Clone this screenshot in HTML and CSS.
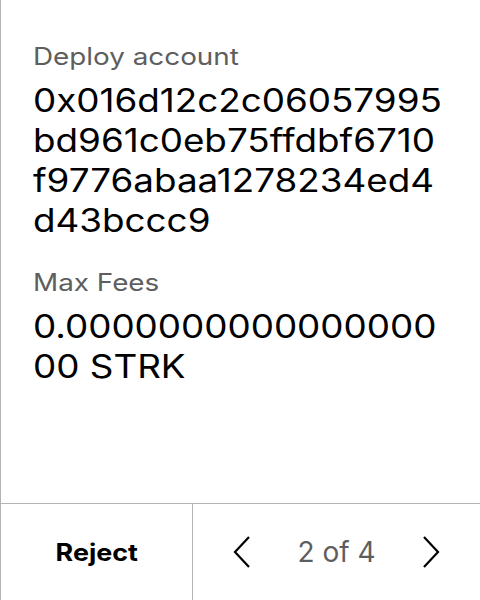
FILE: index.html
```html
<!DOCTYPE html>
<html>
<head>
<meta charset="utf-8">
<link rel="stylesheet" href="styles.css">
</head>
<body>
<div class="screen">
  <main class="content">
    <section class="field">
      <div class="label">Deploy account</div>
      <div class="value">0x016d12c2c06057995<br>bd961c0eb75ffdbf6710<br>f9776abaa1278234ed4<br>d43bccc9</div>
    </section>
    <section class="field">
      <div class="label">Max Fees</div>
      <div class="value">0.0000000000000000<br>00 STRK</div>
    </section>
  </main>
  <footer class="footer">
    <div class="reject"><span class="reject-text">Reject</span></div>
    <div class="pager">
      <svg class="chev" width="18" height="32" viewBox="0 0 18 32"><path d="M16 1 L2 16 L16 31" fill="none" stroke="#000" stroke-width="2.2"/></svg>
      <span class="count">2 of 4</span>
      <svg class="chev" width="18" height="32" viewBox="0 0 18 32"><path d="M2 1 L16 16 L2 31" fill="none" stroke="#000" stroke-width="2.2"/></svg>
    </div>
  </footer>
</div>
</body>
</html>
```

FILE: styles.css
```css
html, body {
  margin: 0;
  padding: 0;
  background: #fff;
}
body {
  font-family: Inter, "Noto Sans", sans-serif;
  color: #000;
}
.screen {
  width: 480px;
  height: 600px;
  box-sizing: border-box;
  border-left: 1px solid #b3b3b3;
  display: flex;
  flex-direction: column;
  overflow: hidden;
}
.content {
  flex: 1;
  padding: 41px 0 0 32px;
  display: flex;
  flex-direction: column;
  gap: 26px;
}
.field {
  display: flex;
  flex-direction: column;
  align-items: flex-start;
  gap: 8px;
}
.label {
  font-size: 24px;
  line-height: 32px;
  color: #5e5e5e;
  white-space: nowrap;
  transform: scaleX(1.16);
  transform-origin: left center;
}
.value {
  font-size: 32px;
  line-height: 40px;
  color: #000;
  white-space: nowrap;
  transform: scaleX(1.15);
  transform-origin: left center;
}
.footer {
  height: 96px;
  border-top: 1px solid #b3b3b3;
  display: flex;
}
.reject {
  width: 191px;
  border-right: 1px solid #b3b3b3;
  display: flex;
  align-items: center;
  justify-content: center;
}
.reject-text {
  display: inline-block;
  font-size: 24px;
  font-weight: 700;
  transform: scaleX(1.12);
}
.pager {
  flex: 1;
  display: flex;
  align-items: center;
  justify-content: center;
  gap: 46px;
}
.count {
  font-size: 28px;
  color: #5e5e5e;
}
.chev {
  display: block;
}
```
